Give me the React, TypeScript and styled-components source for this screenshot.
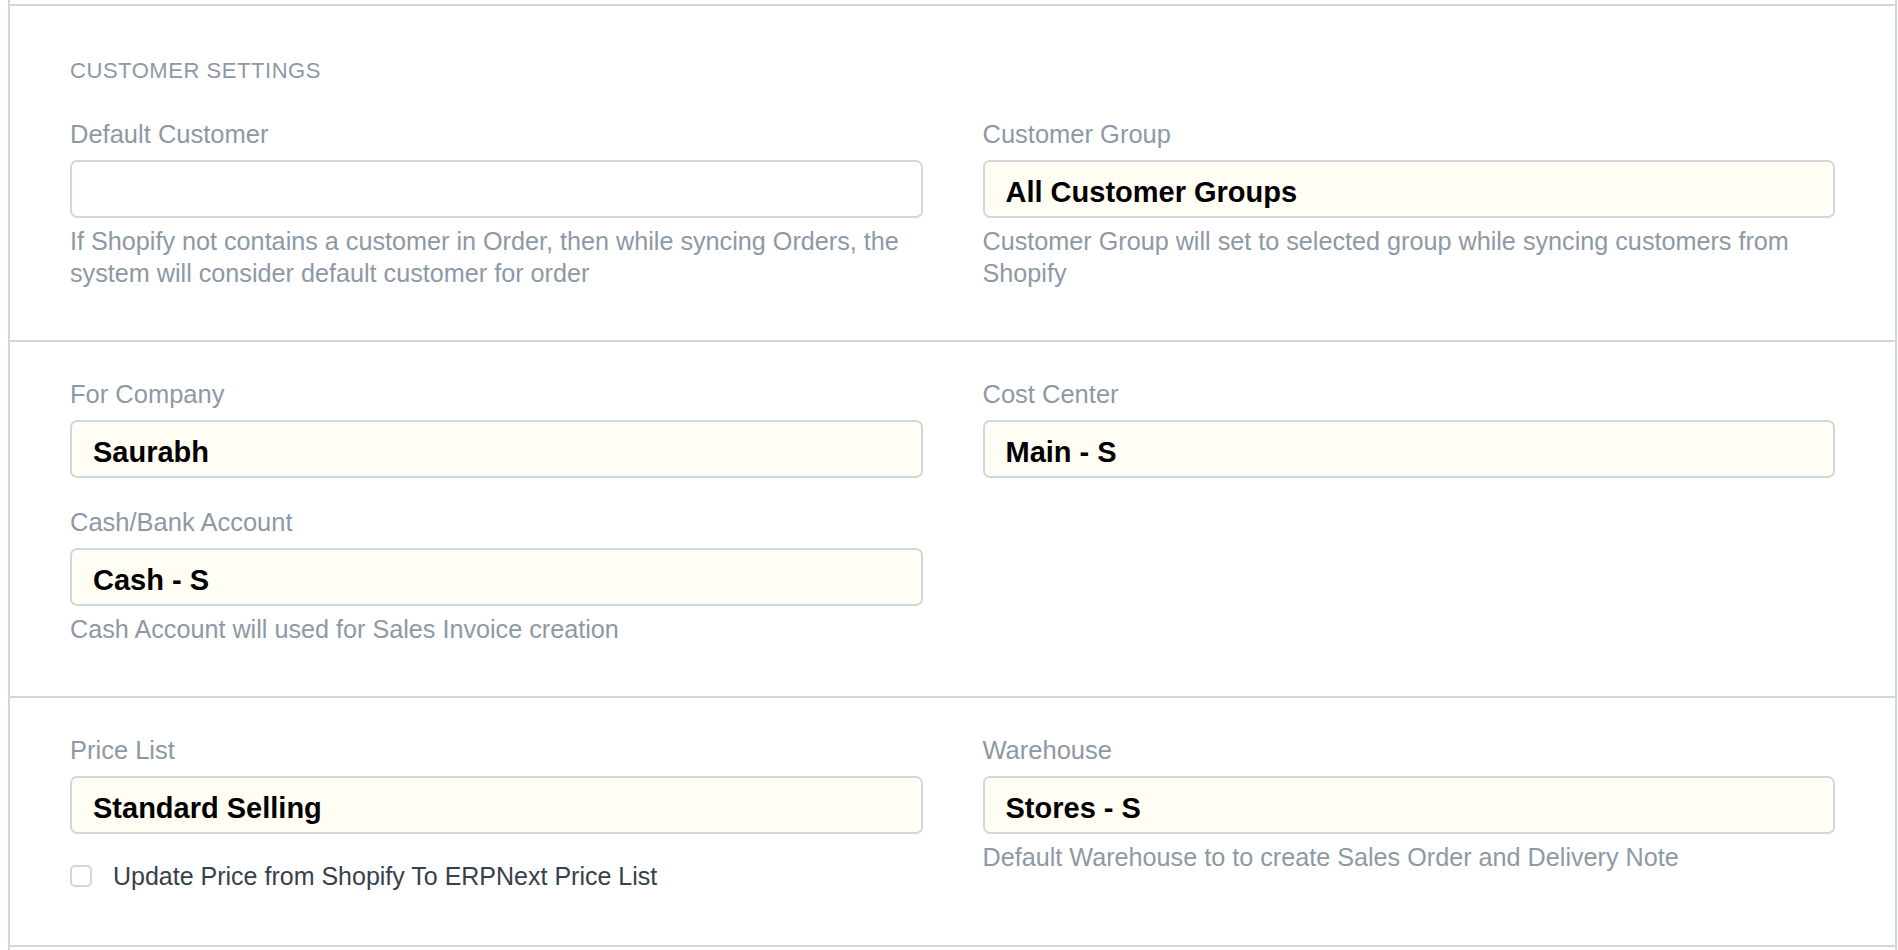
import React from "react";
import styled, { createGlobalStyle } from "styled-components";

const GlobalStyle = createGlobalStyle`
  html, body {
    margin: 0;
    padding: 0;
    background: #ffffff;
  }
  body {
    font-family: "Liberation Sans", Arial, sans-serif;
    -webkit-font-smoothing: antialiased;
  }
`;

const Page = styled.div`
  padding-left: 8px;
  width: 1898px;
  box-sizing: border-box;
`;

const Frame = styled.div`
  width: 1889px;
  box-sizing: border-box;
  min-height: 950px;
  padding-top: 4px;
  border-left: 2px solid #d1d8dd;
  border-right: 2px solid #d1d8dd;
`;

const Section = styled.section<{ $last?: boolean }>`
  border-top: 2px solid #d1d8dd;
  border-bottom: ${(p) => (p.$last ? "2px solid #d1d8dd" : "none")};
  padding: 34px 60px 25px 60px;
`;

const SectionHeading = styled.h6`
  margin: 15px 0 29px 0;
  font-size: 22px;
  line-height: 32px;
  font-weight: 400;
  letter-spacing: 0.55px;
  color: #8d99a6;
  text-transform: uppercase;
`;

const Columns = styled.div`
  display: grid;
  grid-template-columns: 1fr 1fr;
  column-gap: 60px;
  align-items: start;
`;

const Column = styled.div`
  display: flex;
  flex-direction: column;
  min-width: 0;
`;

const FieldGroup = styled.div<{ $flush?: boolean }>`
  display: flex;
  flex-direction: column;
  margin-bottom: ${(p) => (p.$flush ? "0" : "26px")};
`;

const Label = styled.label`
  font-size: 25.5px;
  line-height: 36px;
  color: #8d99a6;
  margin-bottom: 8px;
`;

const Input = styled.div<{ $filled?: boolean }>`
  box-sizing: border-box;
  height: 58px;
  border: 2px solid #d1d8dd;
  border-radius: 7px;
  background: ${(p) => (p.$filled ? "#fffdf4" : "#ffffff")};
  padding: 6px 21px 0 21px;
  font-size: 29px;
  line-height: 48px;
  font-weight: 700;
  color: #000000;
  white-space: nowrap;
  overflow: hidden;
`;

const Help = styled.p`
  margin: 7px 0 0 0;
  font-size: 25.2px;
  line-height: 32px;
  color: #8d99a6;
`;

const CheckRow = styled.label`
  display: flex;
  align-items: center;
  height: 36px;
  margin-top: 24px;
  margin-bottom: 26px;
`;

const CheckBox = styled.span`
  box-sizing: border-box;
  width: 22px;
  height: 22px;
  border: 2px solid #d1d8dd;
  border-radius: 5px;
  background: #ffffff;
  margin-right: 21px;
  flex: none;
`;

const CheckText = styled.span`
  font-size: 25px;
  line-height: 36px;
  color: #36414c;
`;

type FieldProps = { label: string; value?: string; help?: string; flush?: boolean };

const Field: React.FC<FieldProps> = ({ label, value, help, flush }) => (
  <FieldGroup $flush={flush}>
    <Label>{label}</Label>
    <Input $filled={!!value}>{value}</Input>
    {help && <Help>{help}</Help>}
  </FieldGroup>
);

export default function App() {
  return (
    <Page>
      <GlobalStyle />
      <Frame>
        <Section>
          <SectionHeading>Customer Settings</SectionHeading>
          <Columns>
            <Column>
              <Field
                label="Default Customer"
                help="If Shopify not contains a customer in Order, then while syncing Orders, the system will consider default customer for order"
              />
            </Column>
            <Column>
              <Field
                label="Customer Group"
                value="All Customer Groups"
                help="Customer Group will set to selected group while syncing customers from Shopify"
              />
            </Column>
          </Columns>
        </Section>
        <Section>
          <Columns>
            <Column>
              <Field label="For Company" value="Saurabh" />
              <Field
                label="Cash/Bank Account"
                value="Cash - S"
                help="Cash Account will used for Sales Invoice creation"
              />
            </Column>
            <Column>
              <Field label="Cost Center" value="Main - S" />
            </Column>
          </Columns>
        </Section>
        <Section $last>
          <Columns>
            <Column>
              <Field label="Price List" value="Standard Selling" flush />
              <CheckRow>
                <CheckBox />
                <CheckText>Update Price from Shopify To ERPNext Price List</CheckText>
              </CheckRow>
            </Column>
            <Column>
              <Field
                label="Warehouse"
                value="Stores - S"
                help="Default Warehouse to to create Sales Order and Delivery Note"
              />
            </Column>
          </Columns>
        </Section>
      </Frame>
    </Page>
  );
}
